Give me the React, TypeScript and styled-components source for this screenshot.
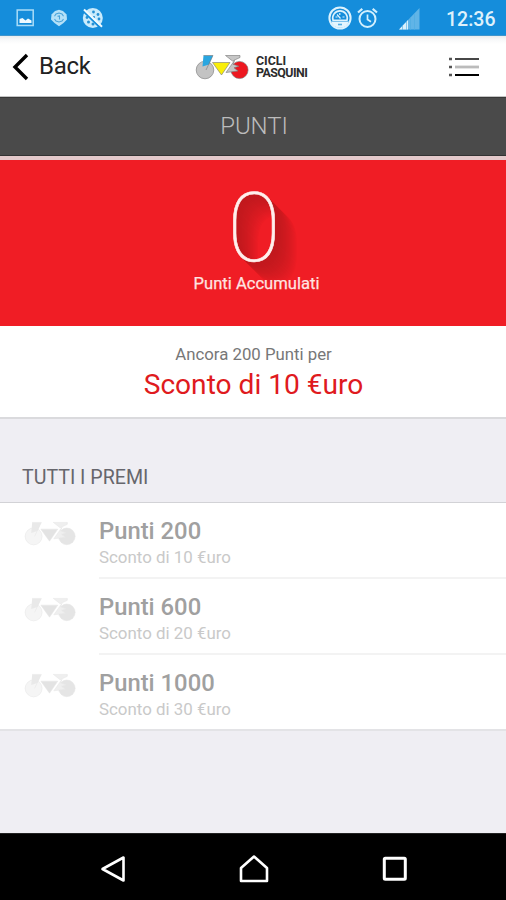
import React from "react";
import styled, { createGlobalStyle } from "styled-components";

const Global = createGlobalStyle`
  * { box-sizing: border-box; }
  body { margin: 0; background: #efeef3; font-family: Roboto, "Liberation Sans", sans-serif; }
`;

const Screen = styled.div`
  width: 506px;
  height: 900px;
  display: flex;
  flex-direction: column;
  background: #efeef3;
  overflow: hidden;
`;

const StatusBar = styled.div`
  height: 36px;
  flex: none;
  display: flex;
  align-items: center;
  padding: 0 11px 0 16px;
  background: #158ddb;
  border-bottom: 1px solid #3f95cd;
`;

const StatusIcon = styled.svg<{ $gap?: number }>`
  flex: none;
  margin-right: ${(p) => p.$gap ?? 0}px;
`;

const Spacer = styled.div`
  flex: 1;
`;

const Clock = styled.span`
  width: 49px;
  font-size: 19.5px;
  line-height: 36px;
  font-weight: 500;
  white-space: nowrap;
  padding-top: 4px;
  color: #dff1fb;
`;

const Header = styled.header`
  height: 61px;
  flex: none;
  display: grid;
  grid-template-columns: 195px 1fr 58px;
  align-items: center;
  padding-top: 1px;
  background: linear-gradient(#e9ebed 0, #f6f7f8 3px, #fff 8px);
  border-bottom: 1px solid #c4c4c4;
`;

const BackButton = styled.div`
  display: flex;
  align-items: center;
  gap: 10px;
  padding-left: 12px;
  font-size: 24px;
  line-height: 28px;
  letter-spacing: -0.3px;
  color: #222;
`;

const BackText = styled.span`
  padding-bottom: 1px;
`;

const Brand = styled.div`
  display: flex;
  align-items: center;
  gap: 7px;
`;

const BrandName = styled.div`
  font-size: 12.4px;
  line-height: 12px;
  font-weight: 700;
  color: #2c2c2c;
`;

const BrandLine = styled.div<{ $spacing: number }>`
  letter-spacing: ${(p) => p.$spacing}px;
`;

const TitleBar = styled.div`
  height: 59px;
  flex: none;
  background: #4a4a4a;
  border-top: 1px solid #383838;
  border-bottom: 1px solid #333;
  color: #bcbcbc;
  text-align: center;
  font-size: 24px;
  font-weight: 300;
  line-height: 56px;
  letter-spacing: -0.1px;
  padding-left: 2px;
`;

const Score = styled.section`
  height: 170px;
  flex: none;
  border-top: 4px solid #e4c9cb;
  background: #f01d25;
  color: #fff;
  display: flex;
  flex-direction: column;
  align-items: center;
`;

const shadowSteps = 22;
const longShadow = Array.from({ length: shadowSteps }, (_, i) => {
  const t = Math.pow(i / shadowSteps, 1.6);
  const mix = (a: number, b: number) => Math.round(a + (b - a) * t);
  return `${i + 1}px ${i + 1}px 0 rgb(${mix(194, 238)}, ${mix(25, 29)}, ${mix(30, 37)})`;
}).join(", ");

const ScoreValue = styled.div`
  height: 112px;
  padding: 11px 0 0 2px;
  font-size: 97px;
  line-height: 114px;
  font-weight: 100;
  color: #fff0ed;
  -webkit-text-stroke: 0.6px #fff0ed;
  text-shadow: ${longShadow};
`;

const ScoreLabel = styled.div`
  padding-left: 7px;
  font-size: 16.6px;
  line-height: 24px;
  color: #ffe4e1;
  -webkit-text-stroke: 0.25px #ffe4e1;
`;

const NextPrize = styled.section`
  height: 93px;
  flex: none;
  padding: 17px 0 0 1px;
  text-align: center;
  background: #fff;
  border-bottom: 2px solid #dadadd;
`;

const Remaining = styled.div`
  font-size: 16.8px;
  line-height: 22px;
  color: #777;
`;

const PrizeName = styled.div`
  font-size: 28.1px;
  line-height: 40px;
  color: #df1a20;
`;

const SectionTitle = styled.h2`
  margin: 0;
  height: 84px;
  flex: none;
  padding: 46px 22px 0;
  font-size: 19.6px;
  line-height: 26px;
  font-weight: 400;
  color: #66666c;
  border-bottom: 1px solid #d2d2d6;
`;

const PrizeList = styled.div`
  flex: none;
  background: #fff;
  border-bottom: 2px solid #e3e3e6;
`;

const PrizeRow = styled.div<{ $last: boolean }>`
  height: ${(p) => (p.$last ? 74 : 76)}px;
  display: flex;
  padding-left: 24px;
`;

const PrizeIcon = styled.div`
  width: 75px;
  padding-top: 17px;
`;

const PrizeBody = styled.div<{ $last: boolean }>`
  flex: 1;
  padding-top: 14px;
  border-bottom: ${(p) => (p.$last ? "none" : "2px solid #f3f3f3")};
`;

const PrizePoints = styled.div`
  font-size: 23.8px;
  line-height: 28px;
  font-weight: 500;
  color: #a0a0a0;
`;

const PrizeText = styled.div`
  font-size: 16.9px;
  line-height: 25px;
  color: #c9c9c9;
`;

const NavBar = styled.nav`
  height: 67px;
  flex: none;
  margin-top: auto;
  padding: 4px 98px 0 100px;
  display: flex;
  align-items: center;
  justify-content: space-between;
  background: #000;
  border-top: 1px solid #222;
`;

const bikeColors = {
  brand: { rear: "#c3c3c3", front: "#ed1820", fork: "#2aa6e0", frame: "#f9ee09", bars: "#c6c6c6", line: "#777" },
  muted: { rear: "#f5f5f5", front: "#e5e5e5", fork: "#e9e9e9", frame: "#e3e3e3", bars: "#efefef", line: "#e6e6e6" },
};

function Bike({ tone, width }: { tone: keyof typeof bikeColors; width: number }) {
  const c = bikeColors[tone];
  return (
    <svg width={width} height={width * 0.5} viewBox="0 0 54 27" stroke={c.line} strokeWidth=".6">
      <circle cx="10" cy="17" r="8.8" fill={c.rear} />
      <circle cx="44.5" cy="17" r="8.6" fill={c.front} />
      <path d="M8.5 2.5H18L14 11.5 7.5 13.5z" fill={c.fork} stroke="none" />
      <path d="M8.5 2.5H18L11 17" fill="none" />
      <path d="M17.5 9.5h17.5L26.5 22z" fill={c.frame} />
      <path d="M30.5 2.5H45v2L37.5 8z" fill={c.bars} />
      <path d="M39.5 7.5 31 19.5l12-1.5-4-3.2 5-1.6-6-2z" fill={c.bars} />
    </svg>
  );
}

const prizes = [
  { points: 200, reward: "Sconto di 10 €uro" },
  { points: 600, reward: "Sconto di 20 €uro" },
  { points: 1000, reward: "Sconto di 30 €uro" },
];

export default function App() {
  return (
    <Screen>
      <Global />
      <StatusBar>
        <StatusIcon $gap={15} width="19" height="18" viewBox="0 0 19 18">
          <rect x="1.2" y="1" width="16" height="15.5" fill="none" stroke="#a9dcf7" strokeWidth="1.5" />
          <path d="M3.5 14v-4l3-1 3 2.5 2.5-2 3.5 2V14z" fill="#eefaff" />
        </StatusIcon>
        <StatusIcon $gap={14} width="18" height="18" viewBox="0 0 18 18" fill="none">
          <path d="m9 .8 4 1.2 3.6 3.5.4 5-3.5 3.6L9 17.2l-4.5-3.1L1 10.5l.5-5L5 2z" fill="#b5e1f8" />
          <path d="M4.5 7.3 6 5l3-1 3 1 1.5 2.3M4.5 10l1.5 2 3 1 3-1 1.5-2M7.5 7.3 9.5 7v3.5" stroke="#4aa3d9" strokeWidth="1.1" />
        </StatusIcon>
        <StatusIcon width="22" height="22" viewBox="0 0 22 22">
          <circle cx="10.8" cy="11" r="10" fill="#c9ebfc" />
          <g fill="#2690d3">
            <circle cx="11.5" cy="5" r="1.4" />
            <circle cx="16" cy="7.5" r="1.4" />
            <circle cx="17" cy="12" r="1.4" />
            <circle cx="5" cy="10.5" r="1.4" />
            <circle cx="6.5" cy="15" r="1.5" />
            <circle cx="11" cy="17" r="1.5" />
            <circle cx="12" cy="10" r="1.1" />
          </g>
          <path d="M.5 3.5 18.5 21" stroke="#158ddb" strokeWidth="1.8" />
          <path d="M2 2.5 20 19.7" stroke="#eefaff" strokeWidth="2" />
        </StatusIcon>
        <Spacer />
        <StatusIcon $gap={5} width="24" height="24" viewBox="0 0 24 24" fill="none">
          <circle cx="12" cy="12" r="10.6" stroke="#dcf2fd" strokeWidth="2" />
          <path d="M5 14.2a7.3 7.3 0 1 1 14 0z" stroke="#dcf2fd" strokeWidth="1.6" />
          <path d="M7.5 11h2M11.8 7v2M14.5 11h2M9 8.5l3.5 4" stroke="#dcf2fd" strokeWidth="1.2" />
          <path d="M3 15.5h18a9.6 9.6 0 0 1-18 0z" fill="#e4f5fe" />
          <path d="M10 18.5h4" stroke="#55aee2" strokeWidth="1.6" />
        </StatusIcon>
        <StatusIcon $gap={21} width="21" height="22" viewBox="0 0 21 22" fill="none" stroke="#d2effd">
          <circle cx="10.5" cy="12" r="8" strokeWidth="2" />
          <path d="M10.5 7.5v5l3.5 2.3" strokeWidth="1.7" />
          <path d="M1 5.5 5.3 1.8M20 5.5l-4.3-3.7" strokeWidth="2.2" />
        </StatusIcon>
        <StatusIcon $gap={26} width="21" height="24" viewBox="0 0 21 24">
          <path d="M0 23.5 20.5 2v21.5z" fill="#60b4e7" />
          <path d="M0 23.5 9 14v9.5z" fill="#d9f0fc" />
          <path d="M3.5 19v5M7.5 15v9M11.5 11v13M15.5 7v17" stroke="#4cabe2" strokeWidth=".6" />
        </StatusIcon>
        <Clock>12:36</Clock>
      </StatusBar>

      <Header>
        <BackButton>
          <svg width="17" height="28" viewBox="0 0 17 28" fill="none">
            <path d="M15 2 3 14l12 12" stroke="#000" strokeWidth="3.4" />
          </svg>
          <BackText>Back</BackText>
        </BackButton>
        <Brand>
          <Bike tone="brand" width={54} />
          <BrandName>
            <BrandLine $spacing={0}>CICLI</BrandLine>
            <BrandLine $spacing={-0.55}>PASQUINI</BrandLine>
          </BrandName>
        </Brand>
        <svg width="31" height="20" viewBox="0 0 31 20">
          <path d="M1 2h3M1 10h3M1 18h3" stroke="#555" strokeWidth="2.4" />
          <path d="M7 2h24" stroke="#333" strokeWidth="1.8" />
          <path d="M7 10h24" stroke="#bbb" strokeWidth="2.8" />
          <path d="M7 18h24" stroke="#000" strokeWidth="2" />
        </svg>
      </Header>

      <TitleBar>PUNTI</TitleBar>

      <Score>
        <ScoreValue>0</ScoreValue>
        <ScoreLabel>Punti Accumulati</ScoreLabel>
      </Score>

      <NextPrize>
        <Remaining>Ancora 200 Punti per</Remaining>
        <PrizeName>Sconto di 10 €uro</PrizeName>
      </NextPrize>

      <SectionTitle>TUTTI I PREMI</SectionTitle>
      <PrizeList>
        {prizes.map((prize, i) => {
          const last = i === prizes.length - 1;
          return (
            <PrizeRow key={prize.points} $last={last}>
              <PrizeIcon>
                <Bike tone="muted" width={52} />
              </PrizeIcon>
              <PrizeBody $last={last}>
                <PrizePoints>Punti {prize.points}</PrizePoints>
                <PrizeText>{prize.reward}</PrizeText>
              </PrizeBody>
            </PrizeRow>
          );
        })}
      </PrizeList>

      <NavBar>
        <svg width="26" height="28" viewBox="0 0 26 28" fill="none">
          <path d="M23.5 2.5v23L2.5 14z" stroke="#fff" strokeWidth="2.6" strokeLinejoin="round" />
        </svg>
        <svg width="30" height="30" viewBox="0 0 30 30" fill="none">
          <path d="M15 2.5 28 14v13H2V14z" stroke="#fff" strokeWidth="2.6" strokeLinejoin="round" />
        </svg>
        <svg width="26" height="26" viewBox="0 0 26 26" fill="none">
          <rect x="2.3" y="2.3" width="21" height="21" rx="1" stroke="#fff" strokeWidth="3" />
        </svg>
      </NavBar>
    </Screen>
  );
}
